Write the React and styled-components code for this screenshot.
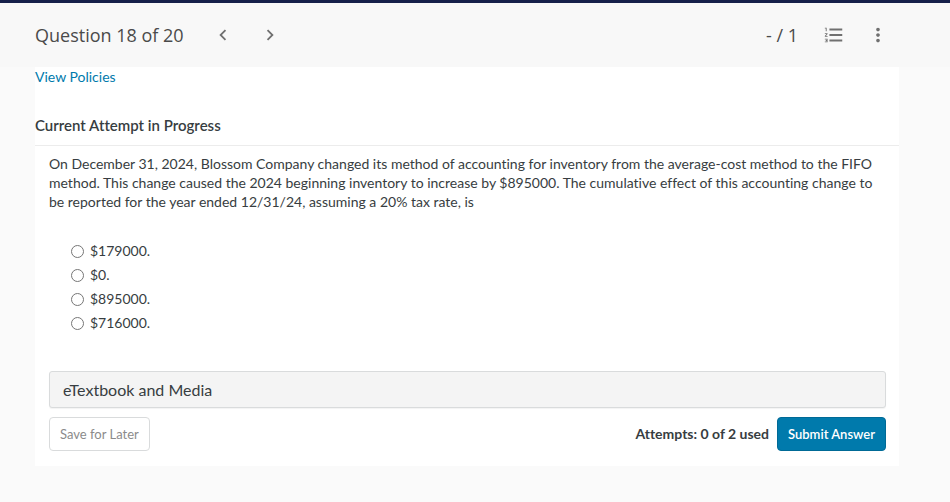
import React from "react";
import styled, { createGlobalStyle } from "styled-components";
import { MdChevronLeft, MdChevronRight, MdFormatListNumbered, MdMoreVert } from "react-icons/md";

const GlobalStyle = createGlobalStyle`
  * {
    box-sizing: border-box;
  }
  body {
    background: #fafafa;
    color: #373d41;
    font-family: Lato, "Liberation Sans", sans-serif;
    font-size: 14px;
    font-variant-ligatures: none;
    line-height: 20px;
    margin: 0;
  }
`;

const Header = styled.header`
  align-items: center;
  background: #f8f8f8;
  border-top: 3px solid #16204a;
  color: #4a4a4a;
  display: flex;
  font-family: "Open Sans", sans-serif;
  font-size: 18px;
  height: 67px;
  padding: 0 61px 0 35px;
`;

const QuestionTitle = styled.h1`
  font-size: 18px;
  font-weight: 400;
  line-height: 24px;
  margin: 0;
`;

const QuestionNav = styled.nav`
  display: flex;
  gap: 25px;
  margin-left: 28px;
`;

const Score = styled.span`
  margin-left: auto;
`;

const Tools = styled.div`
  display: flex;
  gap: 22px;
  margin-left: 25px;
`;

const IconButton = styled.button`
  background: none;
  border: none;
  color: #707070;
  cursor: pointer;
  display: flex;
  font-size: 22px;
  padding: 0;
`;

const Card = styled.main`
  background: white;
  margin: 0 51px 0 35px;
  padding-bottom: 15px;
`;

const PolicyLink = styled.a`
  color: #007aac;
  display: inline-block;
  text-decoration: none;
  &:hover {
    text-decoration: underline;
  }
`;

const SectionTitle = styled.h2`
  border-bottom: 1px solid #ececec;
  font-size: 15px;
  font-weight: 600;
  line-height: 20px;
  margin: 28px 0 0;
  padding-bottom: 10px;
`;

const Body = styled.div`
  padding: 8px 13px 0 14px;
`;

const Prompt = styled.p`
  line-height: 19px;
  margin: 0;
`;

const Choices = styled.fieldset`
  border: none;
  display: grid;
  gap: 4px;
  justify-content: start;
  margin: 30px 0 0;
  padding: 0 22px;
`;

const Choice = styled.label`
  align-items: center;
  display: flex;
  gap: 6px;
`;

const Radio = styled.input`
  height: 13px;
  margin: 0;
  width: 13px;
`;

const MediaButton = styled.button`
  background: #f4f4f4;
  border: 1px solid #d9dbdc;
  border-radius: 3px;
  box-shadow: 0 1px 1px rgba(0, 0, 0, .05);
  color: #373d41;
  cursor: pointer;
  display: block;
  font-family: inherit;
  font-size: 16px;
  font-variant-ligatures: none;
  line-height: 19px;
  margin-top: 38px;
  padding: 8px 13px;
  text-align: left;
  width: 100%;
`;

const Footer = styled.div`
  align-items: center;
  display: flex;
  justify-content: space-between;
  margin-top: 9px;
`;

const Submission = styled.div`
  align-items: center;
  display: flex;
  gap: 8px;
`;

const Attempts = styled.span`
  font-weight: 700;
`;

const ActionButton = styled.button`
  background: ${p => p.$primary ? "#007aac" : "white"};
  border: 1px solid ${p => p.$primary ? "#006a96" : "#d9dbdc"};
  border-radius: 4px;
  color: ${p => p.$primary ? "white" : "#8b8b8b"};
  cursor: pointer;
  font-family: inherit;
  font-size: 13px;
  font-weight: ${p => p.$primary ? 600 : 400};
  line-height: 20px;
  padding: 6px 10px;
`;

const answers = ["$179000.", "$0.", "$895000.", "$716000."];

export default function App() {
  return (
    <>
      <GlobalStyle />
      <Header>
        <QuestionTitle>Question 18 of 20</QuestionTitle>
        <QuestionNav>
          <IconButton aria-label="Previous question"><MdChevronLeft /></IconButton>
          <IconButton aria-label="Next question"><MdChevronRight /></IconButton>
        </QuestionNav>
        <Score>- / 1</Score>
        <Tools>
          <IconButton aria-label="Question list"><MdFormatListNumbered /></IconButton>
          <IconButton aria-label="More options"><MdMoreVert /></IconButton>
        </Tools>
      </Header>
      <Card>
        <PolicyLink href="#policies">View Policies</PolicyLink>
        <SectionTitle>Current Attempt in Progress</SectionTitle>
        <Body>
          <Prompt>
            On December 31, 2024, Blossom Company changed its method of accounting for inventory from the
            average-cost method to the FIFO method. This change caused the 2024 beginning inventory to increase
            by $895000. The cumulative effect of this accounting change to be reported for the year ended
            12/31/24, assuming a 20% tax rate, is
          </Prompt>
          <Choices aria-label="Answer choices">
            {answers.map(answer => (
              <Choice key={answer}>
                <Radio type="radio" name="answer" value={answer} />
                {answer}
              </Choice>
            ))}
          </Choices>
          <MediaButton>eTextbook and Media</MediaButton>
          <Footer>
            <ActionButton>Save for Later</ActionButton>
            <Submission>
              <Attempts>Attempts: 0 of 2 used</Attempts>
              <ActionButton $primary>Submit Answer</ActionButton>
            </Submission>
          </Footer>
        </Body>
      </Card>
    </>
  );
}
